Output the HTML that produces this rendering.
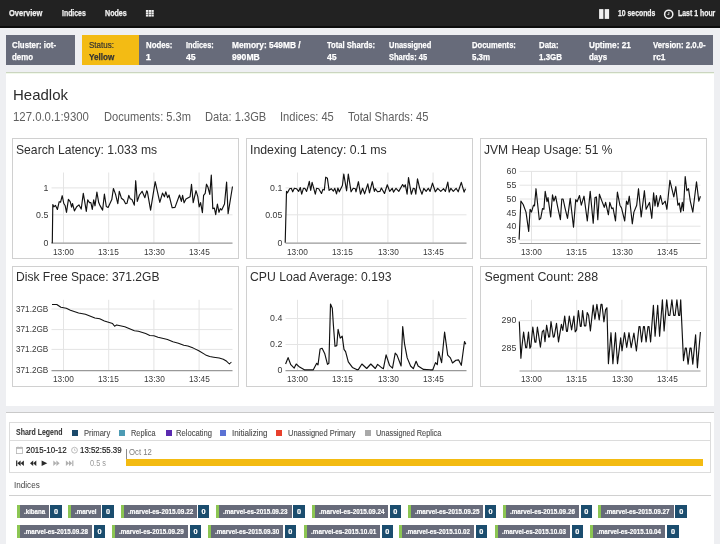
<!DOCTYPE html>
<html><head><meta charset="utf-8"><style>
html,body{margin:0;padding:0;width:720px;height:544px;overflow:hidden;background:#eeeff2;font-family:"Liberation Sans",sans-serif;}
.r{position:absolute}
.t{position:absolute;white-space:nowrap;line-height:1;transform-origin:0 0;filter:grayscale(1)}
svg{position:absolute;left:0;top:0}
</style></head><body>
<div class="r" style="left:0px;top:0px;width:720px;height:26px;background:#222"></div><div class="r" style="left:0px;top:26px;width:720px;height:2px;background:#0d0d0d"></div><div class="r" style="left:6px;top:35.3px;width:69px;height:29.9px;background:#676b7a"></div><div class="r" style="left:82px;top:35.3px;width:57.2px;height:29.9px;background:#f3bb14"></div><div class="r" style="left:139.2px;top:35.3px;width:573.8px;height:29.9px;background:#676b7a"></div><div class="r" style="left:6px;top:72px;width:707.5px;height:334px;background:#fff"></div><div class="r" style="left:6px;top:72px;width:707.5px;height:1px;background:#cbd5c0"></div><div class="r" style="left:6px;top:73px;width:707.5px;height:1px;background:#f1f9ea"></div><div class="r" style="left:12.2px;top:138px;width:227.0px;height:120.7px;border:1px solid #d0d0d0;box-sizing:border-box"></div><div class="r" style="left:246.2px;top:138px;width:227.0px;height:120.7px;border:1px solid #d0d0d0;box-sizing:border-box"></div><div class="r" style="left:480.2px;top:138px;width:227.0px;height:120.7px;border:1px solid #d0d0d0;box-sizing:border-box"></div><div class="r" style="left:12.2px;top:266px;width:227.0px;height:120.7px;border:1px solid #d0d0d0;box-sizing:border-box"></div><div class="r" style="left:246.2px;top:266px;width:227.0px;height:120.7px;border:1px solid #d0d0d0;box-sizing:border-box"></div><div class="r" style="left:480.2px;top:266px;width:227.0px;height:120.7px;border:1px solid #d0d0d0;box-sizing:border-box"></div><div class="r" style="left:6px;top:412px;width:707.5px;height:1px;background:#c9c9c9"></div><div class="r" style="left:6px;top:413px;width:707.5px;height:131px;background:#fff"></div><div class="r" style="left:9px;top:422px;width:701.8px;height:50.5px;border:1px solid #dcdcdc;box-sizing:border-box"></div><div class="r" style="left:9px;top:440px;width:701.8px;height:1px;background:#dcdcdc"></div><div class="r" style="left:72.1px;top:430.3px;width:6px;height:6px;background:#1b4a6b"></div><div class="r" style="left:118.8px;top:430.3px;width:6px;height:6px;background:#4d9bb4"></div><div class="r" style="left:165.6px;top:430.3px;width:6px;height:6px;background:#5a2ab0"></div><div class="r" style="left:220.4px;top:430.3px;width:6px;height:6px;background:#5b72d4"></div><div class="r" style="left:276.3px;top:430.3px;width:6px;height:6px;background:#e8402c"></div><div class="r" style="left:364.5px;top:430.3px;width:6px;height:6px;background:#a9a9a9"></div><div class="r" style="left:126px;top:448.7px;width:1px;height:10.5px;background:#8a8a8a"></div><div class="r" style="left:126.3px;top:458.8px;width:577px;height:7.2px;background:#f3bb12"></div><div class="r" style="left:9.4px;top:495px;width:701.6px;height:1px;background:#d0d0d0"></div><div class="r" style="left:17.0px;top:505px;width:2.9px;height:12.799999999999955px;background:#8cc653"></div><div class="r" style="left:19.900000000000002px;top:505px;width:29.399999999999995px;height:12.799999999999955px;background:#676b7a"></div><div class="r" style="left:50.3px;top:505px;width:11.700000000000003px;height:12.799999999999955px;background:#1b4d6e"></div><div class="r" style="left:68.4px;top:505px;width:2.9px;height:12.799999999999955px;background:#8cc653"></div><div class="r" style="left:71.3px;top:505px;width:29.699999999999996px;height:12.799999999999955px;background:#676b7a"></div><div class="r" style="left:102.3px;top:505px;width:11.700000000000003px;height:12.799999999999955px;background:#1b4d6e"></div><div class="r" style="left:120.7px;top:505px;width:2.9px;height:12.799999999999955px;background:#8cc653"></div><div class="r" style="left:123.6px;top:505px;width:73.4px;height:12.799999999999955px;background:#676b7a"></div><div class="r" style="left:198px;top:505px;width:11.300000000000011px;height:12.799999999999955px;background:#1b4d6e"></div><div class="r" style="left:216.0px;top:505px;width:2.9px;height:12.799999999999955px;background:#8cc653"></div><div class="r" style="left:218.9px;top:505px;width:72.79999999999998px;height:12.799999999999955px;background:#676b7a"></div><div class="r" style="left:293.3px;top:505px;width:11.399999999999977px;height:12.799999999999955px;background:#1b4d6e"></div><div class="r" style="left:311.7px;top:505px;width:2.9px;height:12.799999999999955px;background:#8cc653"></div><div class="r" style="left:314.6px;top:505px;width:73.70000000000002px;height:12.799999999999955px;background:#676b7a"></div><div class="r" style="left:389.7px;top:505px;width:11.0px;height:12.799999999999955px;background:#1b4d6e"></div><div class="r" style="left:407.7px;top:505px;width:2.9px;height:12.799999999999955px;background:#8cc653"></div><div class="r" style="left:410.6px;top:505px;width:72.70000000000002px;height:12.799999999999955px;background:#676b7a"></div><div class="r" style="left:485px;top:505px;width:11.300000000000011px;height:12.799999999999955px;background:#1b4d6e"></div><div class="r" style="left:503.0px;top:505px;width:2.9px;height:12.799999999999955px;background:#8cc653"></div><div class="r" style="left:505.90000000000003px;top:505px;width:73.1px;height:12.799999999999955px;background:#676b7a"></div><div class="r" style="left:580.7px;top:505px;width:11.0px;height:12.799999999999955px;background:#1b4d6e"></div><div class="r" style="left:598.4000000000001px;top:505px;width:2.9px;height:12.799999999999955px;background:#8cc653"></div><div class="r" style="left:601.3000000000001px;top:505px;width:72.59999999999994px;height:12.799999999999955px;background:#676b7a"></div><div class="r" style="left:675.1px;top:505px;width:12.299999999999955px;height:12.799999999999955px;background:#1b4d6e"></div><div class="r" style="left:17.0px;top:525px;width:2.9px;height:12.700000000000045px;background:#8cc653"></div><div class="r" style="left:19.900000000000002px;top:525px;width:72.10000000000001px;height:12.700000000000045px;background:#676b7a"></div><div class="r" style="left:93.7px;top:525px;width:11.599999999999994px;height:12.700000000000045px;background:#1b4d6e"></div><div class="r" style="left:112.0px;top:525px;width:2.9px;height:12.700000000000045px;background:#8cc653"></div><div class="r" style="left:114.89999999999999px;top:525px;width:72.90000000000002px;height:12.700000000000045px;background:#676b7a"></div><div class="r" style="left:189.7px;top:525px;width:11.600000000000023px;height:12.700000000000045px;background:#1b4d6e"></div><div class="r" style="left:208.0px;top:525px;width:2.9px;height:12.700000000000045px;background:#8cc653"></div><div class="r" style="left:210.9px;top:525px;width:72.4px;height:12.700000000000045px;background:#676b7a"></div><div class="r" style="left:284.7px;top:525px;width:11.300000000000011px;height:12.700000000000045px;background:#1b4d6e"></div><div class="r" style="left:303.7px;top:525px;width:2.9px;height:12.700000000000045px;background:#8cc653"></div><div class="r" style="left:306.6px;top:525px;width:73.4px;height:12.700000000000045px;background:#676b7a"></div><div class="r" style="left:381.7px;top:525px;width:11.0px;height:12.700000000000045px;background:#1b4d6e"></div><div class="r" style="left:399.0px;top:525px;width:2.9px;height:12.700000000000045px;background:#8cc653"></div><div class="r" style="left:401.90000000000003px;top:525px;width:72.1px;height:12.700000000000045px;background:#676b7a"></div><div class="r" style="left:475.7px;top:525px;width:11.0px;height:12.700000000000045px;background:#1b4d6e"></div><div class="r" style="left:495.0px;top:525px;width:2.9px;height:12.700000000000045px;background:#8cc653"></div><div class="r" style="left:497.90000000000003px;top:525px;width:72.1px;height:12.700000000000045px;background:#676b7a"></div><div class="r" style="left:571.7px;top:525px;width:11.0px;height:12.700000000000045px;background:#1b4d6e"></div><div class="r" style="left:590.4000000000001px;top:525px;width:2.9px;height:12.700000000000045px;background:#8cc653"></div><div class="r" style="left:593.3000000000001px;top:525px;width:72.19999999999996px;height:12.700000000000045px;background:#676b7a"></div><div class="r" style="left:667px;top:525px;width:12px;height:12.700000000000045px;background:#1b4d6e"></div>
<svg width="720" height="544" viewBox="0 0 720 544"><line x1="51.5" y1="187.9" x2="232.5" y2="187.9" stroke="#e4e4e4" stroke-width="1"/><line x1="51.5" y1="214.8" x2="232.5" y2="214.8" stroke="#e4e4e4" stroke-width="1"/><line x1="63.5" y1="172.5" x2="63.5" y2="242.7" stroke="#e4e4e4" stroke-width="1"/><line x1="108.7" y1="172.5" x2="108.7" y2="242.7" stroke="#e4e4e4" stroke-width="1"/><line x1="153.9" y1="172.5" x2="153.9" y2="242.7" stroke="#e4e4e4" stroke-width="1"/><line x1="199.10000000000002" y1="172.5" x2="199.10000000000002" y2="242.7" stroke="#e4e4e4" stroke-width="1"/><line x1="51.5" y1="243.1" x2="232.5" y2="243.1" stroke="#999" stroke-width="1.1"/><line x1="285.5" y1="187.9" x2="466.5" y2="187.9" stroke="#e4e4e4" stroke-width="1"/><line x1="285.5" y1="214.8" x2="466.5" y2="214.8" stroke="#e4e4e4" stroke-width="1"/><line x1="297.5" y1="172.5" x2="297.5" y2="242.7" stroke="#e4e4e4" stroke-width="1"/><line x1="342.7" y1="172.5" x2="342.7" y2="242.7" stroke="#e4e4e4" stroke-width="1"/><line x1="387.9" y1="172.5" x2="387.9" y2="242.7" stroke="#e4e4e4" stroke-width="1"/><line x1="433.1" y1="172.5" x2="433.1" y2="242.7" stroke="#e4e4e4" stroke-width="1"/><line x1="285.5" y1="243.1" x2="466.5" y2="243.1" stroke="#999" stroke-width="1.1"/><line x1="519.5" y1="171.4" x2="700.5" y2="171.4" stroke="#e4e4e4" stroke-width="1"/><line x1="519.5" y1="185.2" x2="700.5" y2="185.2" stroke="#e4e4e4" stroke-width="1"/><line x1="519.5" y1="199" x2="700.5" y2="199" stroke="#e4e4e4" stroke-width="1"/><line x1="519.5" y1="212.8" x2="700.5" y2="212.8" stroke="#e4e4e4" stroke-width="1"/><line x1="519.5" y1="226.2" x2="700.5" y2="226.2" stroke="#e4e4e4" stroke-width="1"/><line x1="519.5" y1="240" x2="700.5" y2="240" stroke="#e4e4e4" stroke-width="1"/><line x1="531.5" y1="171.4" x2="531.5" y2="243.1" stroke="#e4e4e4" stroke-width="1"/><line x1="576.7" y1="171.4" x2="576.7" y2="243.1" stroke="#e4e4e4" stroke-width="1"/><line x1="621.9" y1="171.4" x2="621.9" y2="243.1" stroke="#e4e4e4" stroke-width="1"/><line x1="667.1" y1="171.4" x2="667.1" y2="243.1" stroke="#e4e4e4" stroke-width="1"/><line x1="519.5" y1="243.5" x2="700.5" y2="243.5" stroke="#999" stroke-width="1.1"/><line x1="51.5" y1="309" x2="232.5" y2="309" stroke="#e4e4e4" stroke-width="1"/><line x1="51.5" y1="329.6" x2="232.5" y2="329.6" stroke="#e4e4e4" stroke-width="1"/><line x1="51.5" y1="349.4" x2="232.5" y2="349.4" stroke="#e4e4e4" stroke-width="1"/><line x1="63.5" y1="299.8" x2="63.5" y2="370.2" stroke="#e4e4e4" stroke-width="1"/><line x1="108.7" y1="299.8" x2="108.7" y2="370.2" stroke="#e4e4e4" stroke-width="1"/><line x1="153.9" y1="299.8" x2="153.9" y2="370.2" stroke="#e4e4e4" stroke-width="1"/><line x1="199.10000000000002" y1="299.8" x2="199.10000000000002" y2="370.2" stroke="#e4e4e4" stroke-width="1"/><line x1="51.5" y1="370.59999999999997" x2="232.5" y2="370.59999999999997" stroke="#999" stroke-width="1.1"/><line x1="285.5" y1="318.5" x2="466.5" y2="318.5" stroke="#e4e4e4" stroke-width="1"/><line x1="285.5" y1="344.5" x2="466.5" y2="344.5" stroke="#e4e4e4" stroke-width="1"/><line x1="297.5" y1="299.8" x2="297.5" y2="370.2" stroke="#e4e4e4" stroke-width="1"/><line x1="342.7" y1="299.8" x2="342.7" y2="370.2" stroke="#e4e4e4" stroke-width="1"/><line x1="387.9" y1="299.8" x2="387.9" y2="370.2" stroke="#e4e4e4" stroke-width="1"/><line x1="433.1" y1="299.8" x2="433.1" y2="370.2" stroke="#e4e4e4" stroke-width="1"/><line x1="285.5" y1="370.59999999999997" x2="466.5" y2="370.59999999999997" stroke="#999" stroke-width="1.1"/><line x1="519.5" y1="320.6" x2="700.5" y2="320.6" stroke="#e4e4e4" stroke-width="1"/><line x1="519.5" y1="348.1" x2="700.5" y2="348.1" stroke="#e4e4e4" stroke-width="1"/><line x1="531.5" y1="299.8" x2="531.5" y2="370.6" stroke="#e4e4e4" stroke-width="1"/><line x1="576.7" y1="299.8" x2="576.7" y2="370.6" stroke="#e4e4e4" stroke-width="1"/><line x1="621.9" y1="299.8" x2="621.9" y2="370.6" stroke="#e4e4e4" stroke-width="1"/><line x1="667.1" y1="299.8" x2="667.1" y2="370.6" stroke="#e4e4e4" stroke-width="1"/><line x1="519.5" y1="371.0" x2="700.5" y2="371.0" stroke="#999" stroke-width="1.1"/><polyline fill="none" stroke="#111" stroke-width="1.15" stroke-linejoin="round" points="51.6,242.7 52.3,242.7 52.8,204.5 53.9,206.8 55.5,205.4 57.4,209.5 59.2,201.7 60.6,202.2 62.2,195.7 63.8,203.5 65.2,205.8 66.5,212.3 68.4,199.4 70.2,201.7 71.6,207.2 72.5,203.5 74.4,210.9 76.7,206.8 79.0,204.9 81.2,209.1 83.3,193.4 84.5,200.3 86.3,211.4 87.7,199.9 89.5,202.6 90.9,202.6 92.3,209.5 93.7,199.9 95.0,205.8 96.9,192.1 98.7,202.6 99.8,205.1 102.6,210.1 104.4,194.1 106.3,206.5 108.1,207.4 111.8,199.6 113.4,188.5 115.5,194.1 117.8,203.7 119.3,191.3 121.4,198.2 123.7,200.0 125.6,203.7 127.0,203.3 128.8,195.4 130.2,198.7 132.0,199.6 134.3,205.1 135.7,180.7 137.3,201.4 139.4,195.0 142.1,191.3 144.9,197.7 146.7,190.8 147.4,191.8 150.6,210.1 155.2,181.7 159.8,202.3 162.5,193.1 164.4,196.8 165.8,191.8 167.6,197.7 169.0,195.0 172.2,207.8 175.0,207.4 179.5,195.0 181.4,201.4 182.6,195.4 184.1,202.8 186.0,199.1 190.1,196.8 191.5,184.4 193.2,202.6 196.0,190.7 197.8,196.7 199.2,206.8 200.6,202.6 202.4,212.7 203.6,195.3 205.2,193.4 206.5,184.2 207.9,187.0 209.8,194.4 211.3,175.1 212.8,208.6 214.4,208.1 215.7,214.6 217.4,204.0 219.0,212.3 220.3,208.6 221.7,210.0 224.5,204.0 226.6,182.0 228.1,213.7 232.5,186.5"/><polyline fill="none" stroke="#111" stroke-width="1.15" stroke-linejoin="round" points="285.2,242.7 286.5,191.4 287.5,192.8 289.6,188.7 291.3,188.3 292.7,191.8 294.4,188.3 296.5,188.7 298.6,191.4 300.3,187.6 301.7,194.2 303.4,188.3 304.8,188.3 306.6,191.4 308.0,186.6 309.3,181.4 310.7,190.4 312.1,182.4 313.5,187.3 315.3,194.2 316.6,188.3 318.7,188.7 321.5,193.5 322.9,189.4 324.3,190.1 325.7,177.2 327.4,178.3 329.1,190.4 331.2,188.7 333.4,191.1 334.8,188.3 336.5,193.9 337.9,188.0 339.3,191.8 342.4,185.5 343.8,174.1 346.6,190.8 348.3,174.1 351.1,191.8 353.2,188.3 355.3,188.7 356.0,191.8 358.4,181.7 360.5,194.2 362.6,188.3 364.6,193.9 367.8,183.8 369.5,192.8 372.3,181.7 374.4,191.4 375.4,188.7 377.5,191.8 379.9,191.4 381.4,188.0 384.5,193.5 387.3,184.8 389.7,191.4 392.2,188.3 393.5,192.1 396.0,188.3 398.8,191.4 402.6,184.5 404.0,186.9 405.3,184.8 407.1,194.2 408.5,177.6 411.3,194.2 413.3,188.3 414.7,188.7 415.8,194.2 417.5,178.9 419.6,188.0 422.0,194.2 423.8,188.3 426.2,191.4 428.3,188.3 430.1,191.4 432.5,183.1 435.3,191.8 437.7,188.3 440.8,191.4 443.6,188.7 445.4,191.4 447.8,182.1 449.2,192.1 450.9,188.3 453.3,191.4 456.1,188.3 458.2,191.8 461.3,182.4 464.1,192.1 465.5,188.7"/><polyline fill="none" stroke="#111" stroke-width="1.15" stroke-linejoin="round" points="519.1,239.6 520.9,201.1 523.2,204.5 526.0,212.1 528.7,231.4 530.1,209.3 531.5,212.1 533.5,205.2 534.5,205.9 536.0,188.7 539.3,219.7 540.7,218.3 542.5,208.6 543.9,209.3 545.2,191.4 547.0,201.7 548.0,197.6 550.7,216.9 552.5,194.9 553.9,201.1 555.6,196.2 557.6,206.6 560.4,219.7 561.8,199.0 563.1,199.0 565.0,207.9 567.5,218.3 570.2,198.3 573.5,227.2 575.7,199.7 577.1,201.7 579.5,195.5 581.3,205.2 584.0,196.2 587.3,221.0 590.2,191.4 593.2,223.1 595.0,197.6 596.4,196.9 597.8,219.7 599.4,194.2 601.9,201.1 604.3,207.3 605.6,202.4 608.4,214.8 609.8,202.4 611.8,208.6 613.0,207.9 615.5,221.0 617.4,192.1 619.9,205.2 621.5,207.9 624.7,221.0 626.5,201.1 627.9,204.5 629.3,196.2 632.3,223.8 633.9,212.1 636.7,205.2 638.5,188.7 641.2,216.9 644.4,190.7 646.1,209.3 649.5,202.4 651.8,218.3 653.6,192.8 655.0,205.9 656.4,195.5 657.8,206.6 660.5,195.5 662.5,204.5 665.2,201.1 666.9,209.3 669.9,180.4 673.8,196.9 675.8,186.6 677.9,205.2 679.3,203.1 680.7,212.1 682.3,202.4 683.4,210.7 685.2,176.5 686.9,190.7 688.5,188.7 690.3,201.1 692.8,212.1 696.5,181.8 698.8,201.1 700.4,196.2"/><polyline fill="none" stroke="#111" stroke-width="1.15" stroke-linejoin="round" points="285.6,364.0 288.1,357.6 290.8,364.7 294.2,368.1 296.2,364.0 299.6,367.1 304.4,369.8 313.3,369.8 316.7,363.3 318.0,364.9 320.1,349.0 322.1,348.3 324.8,353.8 327.5,364.4 328.9,363.3 330.5,304.1 332.3,308.2 333.4,325.2 335.0,346.3 336.8,345.6 338.1,329.3 340.2,338.1 342.2,336.1 344.0,349.4 345.6,351.7 348.3,361.9 352.4,367.4 357.2,369.8 358.5,369.4 361.9,364.0 366.7,368.5 370.8,364.0 375.3,368.5 377.6,364.4 382.1,368.1 383.4,368.7 386.1,354.9 389.5,365.3 392.5,368.1 395.2,353.1 397.0,355.1 401.1,366.0 402.7,326.6 404.5,343.6 407.2,357.9 410.6,366.0 413.3,368.7 416.1,361.3 418.1,366.0 423.5,369.4 430.1,369.8 432.8,369.8 435.5,362.6 437.3,364.7 438.6,351.7 441.6,362.6 444.6,332.0 447.7,355.1 450.4,357.9 452.5,363.0 455.9,360.3 458.6,359.9 461.3,365.3 464.5,341.5 465.8,344.3"/><polyline fill="none" stroke="#111" stroke-width="1.15" stroke-linejoin="round" points="519.3,321.5 520.9,358.3 521.8,347.7 523.6,332.1 525.7,347.7 526.7,347.7 528.5,332.1 529.9,348.2 530.8,346.8 532.8,327.0 534.9,342.2 535.9,342.2 537.4,327.0 540.4,347.2 542.3,331.6 543.7,330.2 545.0,341.7 546.6,325.2 548.7,337.1 549.6,336.7 551.0,321.5 553.3,337.1 554.2,336.7 556.5,323.3 558.5,341.9 561.4,324.4 562.8,330.4 564.7,316.1 566.5,331.3 567.4,331.3 569.3,316.1 571.6,329.9 573.9,316.1 575.2,331.8 576.6,329.9 578.4,310.6 580.3,326.3 581.2,326.3 582.6,310.6 584.4,325.8 585.8,325.8 587.2,312.5 588.6,315.2 590.4,330.9 593.2,305.1 594.9,319.2 596.9,304.4 599.2,319.9 601.0,304.4 602.0,304.4 603.9,321.8 605.6,309.6 606.9,307.7 608.4,363.6 611.0,332.7 612.9,363.6 615.5,332.7 617.5,363.6 620.7,337.9 622.0,350.8 624.5,332.7 626.7,347.5 629.0,332.7 631.2,347.6 633.9,333.0 636.4,351.0 639.0,326.5 640.0,326.5 641.6,342.0 643.5,326.5 644.4,326.5 646.1,342.0 648.0,326.5 649.0,326.5 650.6,342.0 653.4,305.3 655.1,336.2 657.7,305.3 659.6,336.2 662.4,299.9 664.1,331.0 666.7,299.9 668.5,315.3 669.9,315.3 671.9,299.9 673.7,315.3 675.1,315.3 676.9,299.9 678.6,315.3 679.7,315.3 680.7,299.9 683.5,360.6 685.3,348.1 686.3,348.1 688.1,364.1 690.0,348.1 691.1,348.1 692.8,364.1 695.6,334.8 697.4,367.6 700.4,332.0"/><polyline fill="none" stroke="#111" stroke-width="1.05" stroke-linejoin="round" points="52.0,304.4 56.8,304.5 60.9,307.3 66.3,308.2 70.4,310.2 78.6,313.0 85.4,314.3 94.9,318.1 99.7,318.7 104.4,320.9 112.6,323.6 114.6,326.3 116.7,324.9 124.8,326.8 134.4,330.7 138.4,331.3 145.7,333.6 149.8,335.4 153.9,335.8 158.0,337.2 163.4,338.5 167.5,339.5 172.9,341.8 178.4,343.2 183.8,345.3 187.9,345.9 193.3,348.1 198.8,350.8 205.6,354.9 209.7,356.5 213.7,357.2 219.2,358.1 223.3,359.2 226.7,361.3 229.4,364.0 231.4,362.0"/><rect x="145.90" y="10.00" width="2.35" height="1.95" fill="#f0f0f0"/><rect x="145.90" y="12.30" width="2.35" height="1.95" fill="#f0f0f0"/><rect x="145.90" y="14.60" width="2.35" height="1.95" fill="#f0f0f0"/><rect x="148.65" y="10.00" width="2.35" height="1.95" fill="#f0f0f0"/><rect x="148.65" y="12.30" width="2.35" height="1.95" fill="#f0f0f0"/><rect x="148.65" y="14.60" width="2.35" height="1.95" fill="#f0f0f0"/><rect x="151.40" y="10.00" width="2.35" height="1.95" fill="#f0f0f0"/><rect x="151.40" y="12.30" width="2.35" height="1.95" fill="#f0f0f0"/><rect x="151.40" y="14.60" width="2.35" height="1.95" fill="#f0f0f0"/><rect x="599.1" y="9.1" width="4.3" height="9.8" fill="#f0f0f0"/><rect x="604.7" y="9.1" width="4.4" height="9.8" fill="#f0f0f0"/><circle cx="668.7" cy="14.3" r="4.1" fill="none" stroke="#f0f0f0" stroke-width="1.5"/><path d="M668.9 12 V14.6 H667.4" fill="none" stroke="#e0e0e0" stroke-width="0.9"/><rect x="16.5" y="447.6" width="6" height="6" fill="none" stroke="#b5b5b5" stroke-width="0.8"/><rect x="16.1" y="447.2" width="6.8" height="1.6" fill="#b5b5b5"/><rect x="17.6" y="446.5" width="0.8" height="1.4" fill="#b5b5b5"/><rect x="20.6" y="446.5" width="0.8" height="1.4" fill="#b5b5b5"/><circle cx="74.5" cy="450.2" r="2.9" fill="none" stroke="#aaa" stroke-width="0.8"/><path d="M74.5 448.6 V450.4 H75.6" fill="none" stroke="#aaa" stroke-width="0.6"/><rect x="16.1" y="460.5" width="1.2" height="5.6" fill="#2a2a2a"/><path d="M17.3 463.3 L20.6 460.5 L20.6 466.1 Z" fill="#2a2a2a"/><path d="M20.6 463.3 L23.900000000000002 460.5 L23.900000000000002 466.1 Z" fill="#2a2a2a"/><path d="M30.0 463.3 L33.2 460.5 L33.2 466.1 Z" fill="#2a2a2a"/><path d="M33.1 463.3 L36.300000000000004 460.5 L36.300000000000004 466.1 Z" fill="#2a2a2a"/><path d="M41.6 460.5 L47.3 463.3 L41.6 466.1 Z" fill="#2a2a2a"/><path d="M56.5 463.3 L53.3 460.5 L53.3 466.1 Z" fill="#b0b0b0"/><path d="M59.6 463.3 L56.4 460.5 L56.4 466.1 Z" fill="#b0b0b0"/><path d="M69.1 463.3 L65.89999999999999 460.5 L65.89999999999999 466.1 Z" fill="#b0b0b0"/><path d="M72.2 463.3 L69.0 460.5 L69.0 466.1 Z" fill="#b0b0b0"/><rect x="72.2" y="460.5" width="1.2" height="5.6" fill="#b0b0b0"/></svg>
<div class="t" style="left:9.00px;top:9.13px;font-size:9.3px;font-weight:bold;color:#f2f2f2;-webkit-text-stroke:0.25px #f2f2f2;transform:scaleX(0.8054)">Overview</div><div class="t" style="left:61.80px;top:9.13px;font-size:9.3px;font-weight:bold;color:#f2f2f2;-webkit-text-stroke:0.25px #f2f2f2;transform:scaleX(0.7429)">Indices</div><div class="t" style="left:104.90px;top:9.13px;font-size:9.3px;font-weight:bold;color:#f2f2f2;-webkit-text-stroke:0.25px #f2f2f2;transform:scaleX(0.7673)">Nodes</div><div class="t" style="left:618.00px;top:9.13px;font-size:9.3px;font-weight:bold;color:#f2f2f2;-webkit-text-stroke:0.25px #f2f2f2;transform:scaleX(0.7365)">10 seconds</div><div class="t" style="left:677.90px;top:9.13px;font-size:9.3px;font-weight:bold;color:#f2f2f2;-webkit-text-stroke:0.25px #f2f2f2;transform:scaleX(0.7444)">Last 1 hour</div><div class="t" style="left:12.00px;top:40.04px;font-size:9.4px;font-weight:bold;color:#ffffff;-webkit-text-stroke:0.25px #ffffff;transform:scaleX(0.8365)">Cluster: iot-</div><div class="t" style="left:12.00px;top:52.24px;font-size:9.4px;font-weight:bold;color:#ffffff;-webkit-text-stroke:0.25px #ffffff;transform:scaleX(0.8399)">demo</div><div class="t" style="left:88.50px;top:40.04px;font-size:9.4px;font-weight:normal;color:#3b3318;-webkit-text-stroke:0.2px #3b3318;transform:scaleX(0.8533)">Status:</div><div class="t" style="left:88.50px;top:52.24px;font-size:9.4px;font-weight:bold;color:#3b3318;-webkit-text-stroke:0.25px #3b3318;transform:scaleX(0.8671)">Yellow</div><div class="t" style="left:145.80px;top:40.04px;font-size:9.4px;font-weight:bold;color:#ffffff;-webkit-text-stroke:0.25px #ffffff;transform:scaleX(0.8309)">Nodes:</div><div class="t" style="left:145.80px;top:52.24px;font-size:9.4px;font-weight:bold;color:#ffffff;-webkit-text-stroke:0.25px #ffffff">1</div><div class="t" style="left:186.10px;top:40.04px;font-size:9.4px;font-weight:bold;color:#ffffff;-webkit-text-stroke:0.25px #ffffff;transform:scaleX(0.7819)">Indices:</div><div class="t" style="left:186.10px;top:52.24px;font-size:9.4px;font-weight:bold;color:#ffffff;-webkit-text-stroke:0.25px #ffffff;transform:scaleX(0.9302)">45</div><div class="t" style="left:231.90px;top:40.04px;font-size:9.4px;font-weight:bold;color:#ffffff;-webkit-text-stroke:0.25px #ffffff;transform:scaleX(0.8897)">Memory: 549MB /</div><div class="t" style="left:231.90px;top:52.24px;font-size:9.4px;font-weight:bold;color:#ffffff;-webkit-text-stroke:0.25px #ffffff;transform:scaleX(0.9199)">990MB</div><div class="t" style="left:326.60px;top:40.04px;font-size:9.4px;font-weight:bold;color:#ffffff;-webkit-text-stroke:0.25px #ffffff;transform:scaleX(0.8124)">Total Shards:</div><div class="t" style="left:326.60px;top:52.24px;font-size:9.4px;font-weight:bold;color:#ffffff;-webkit-text-stroke:0.25px #ffffff;transform:scaleX(0.9302)">45</div><div class="t" style="left:389.40px;top:40.04px;font-size:9.4px;font-weight:bold;color:#ffffff;-webkit-text-stroke:0.25px #ffffff;transform:scaleX(0.7942)">Unassigned</div><div class="t" style="left:389.40px;top:52.24px;font-size:9.4px;font-weight:bold;color:#ffffff;-webkit-text-stroke:0.25px #ffffff;transform:scaleX(0.7948)">Shards: 45</div><div class="t" style="left:471.90px;top:40.04px;font-size:9.4px;font-weight:bold;color:#ffffff;-webkit-text-stroke:0.25px #ffffff;transform:scaleX(0.8104)">Documents:</div><div class="t" style="left:471.90px;top:52.24px;font-size:9.4px;font-weight:bold;color:#ffffff;-webkit-text-stroke:0.25px #ffffff;transform:scaleX(0.8424)">5.3m</div><div class="t" style="left:538.50px;top:40.04px;font-size:9.4px;font-weight:bold;color:#ffffff;-webkit-text-stroke:0.25px #ffffff;transform:scaleX(0.8318)">Data:</div><div class="t" style="left:538.50px;top:52.24px;font-size:9.4px;font-weight:bold;color:#ffffff;-webkit-text-stroke:0.25px #ffffff;transform:scaleX(0.8489)">1.3GB</div><div class="t" style="left:588.50px;top:40.04px;font-size:9.4px;font-weight:bold;color:#ffffff;-webkit-text-stroke:0.25px #ffffff;transform:scaleX(0.8701)">Uptime: 21</div><div class="t" style="left:588.50px;top:52.24px;font-size:9.4px;font-weight:bold;color:#ffffff;-webkit-text-stroke:0.25px #ffffff;transform:scaleX(0.8470)">days</div><div class="t" style="left:652.50px;top:40.04px;font-size:9.4px;font-weight:bold;color:#ffffff;-webkit-text-stroke:0.25px #ffffff;transform:scaleX(0.8290)">Version: 2.0.0-</div><div class="t" style="left:652.50px;top:52.24px;font-size:9.4px;font-weight:bold;color:#ffffff;-webkit-text-stroke:0.25px #ffffff;transform:scaleX(0.8809)">rc1</div><div class="t" style="left:13.30px;top:87.51px;font-size:14.4px;font-weight:normal;color:#2b2b2b;transform:scaleX(1.0417)">Headlok</div><div class="t" style="left:13.30px;top:111.17px;font-size:12.2px;font-weight:normal;color:#5f5f5f;transform:scaleX(0.9333)">127.0.0.1:9300</div><div class="t" style="left:103.80px;top:111.17px;font-size:12.2px;font-weight:normal;color:#5f5f5f;transform:scaleX(0.9109)">Documents: 5.3m</div><div class="t" style="left:205.00px;top:111.17px;font-size:12.2px;font-weight:normal;color:#5f5f5f;transform:scaleX(0.9140)">Data: 1.3GB</div><div class="t" style="left:280.00px;top:111.17px;font-size:12.2px;font-weight:normal;color:#5f5f5f;transform:scaleX(0.9127)">Indices: 45</div><div class="t" style="left:347.50px;top:111.17px;font-size:12.2px;font-weight:normal;color:#5f5f5f;transform:scaleX(0.9140)">Total Shards: 45</div><div class="t" style="left:16.40px;top:143.80px;font-size:12.4px;font-weight:normal;color:#2e2e2e;transform:scaleX(0.9809)">Search Latency: 1.033 ms</div><div class="t" style="left:53.10px;top:247.59px;font-size:8.4px;font-weight:normal;color:#3a3a3a;transform:scaleX(0.9925)">13:00</div><div class="t" style="left:98.30px;top:247.59px;font-size:8.4px;font-weight:normal;color:#3a3a3a;transform:scaleX(0.9925)">13:15</div><div class="t" style="left:143.50px;top:247.59px;font-size:8.4px;font-weight:normal;color:#3a3a3a;transform:scaleX(0.9925)">13:30</div><div class="t" style="left:188.70px;top:247.59px;font-size:8.4px;font-weight:normal;color:#3a3a3a;transform:scaleX(0.9925)">13:45</div><div class="t" style="left:43.41px;top:183.75px;font-size:8.8px;font-weight:normal;color:#383838">1</div><div class="t" style="left:36.07px;top:210.65px;font-size:8.8px;font-weight:normal;color:#383838">0.5</div><div class="t" style="left:43.41px;top:238.55px;font-size:8.8px;font-weight:normal;color:#383838">0</div><div class="t" style="left:250.40px;top:143.80px;font-size:12.4px;font-weight:normal;color:#2e2e2e;transform:scaleX(0.9923)">Indexing Latency: 0.1 ms</div><div class="t" style="left:287.10px;top:247.59px;font-size:8.4px;font-weight:normal;color:#3a3a3a;transform:scaleX(0.9925)">13:00</div><div class="t" style="left:332.30px;top:247.59px;font-size:8.4px;font-weight:normal;color:#3a3a3a;transform:scaleX(0.9925)">13:15</div><div class="t" style="left:377.50px;top:247.59px;font-size:8.4px;font-weight:normal;color:#3a3a3a;transform:scaleX(0.9925)">13:30</div><div class="t" style="left:422.70px;top:247.59px;font-size:8.4px;font-weight:normal;color:#3a3a3a;transform:scaleX(0.9925)">13:45</div><div class="t" style="left:270.07px;top:183.75px;font-size:8.8px;font-weight:normal;color:#383838">0.1</div><div class="t" style="left:265.18px;top:210.65px;font-size:8.8px;font-weight:normal;color:#383838">0.05</div><div class="t" style="left:277.41px;top:238.55px;font-size:8.8px;font-weight:normal;color:#383838">0</div><div class="t" style="left:484.40px;top:143.80px;font-size:12.4px;font-weight:normal;color:#2e2e2e;transform:scaleX(0.9718)">JVM Heap Usage: 51 %</div><div class="t" style="left:521.10px;top:247.99px;font-size:8.4px;font-weight:normal;color:#3a3a3a;transform:scaleX(0.9925)">13:00</div><div class="t" style="left:566.30px;top:247.99px;font-size:8.4px;font-weight:normal;color:#3a3a3a;transform:scaleX(0.9925)">13:15</div><div class="t" style="left:611.50px;top:247.99px;font-size:8.4px;font-weight:normal;color:#3a3a3a;transform:scaleX(0.9925)">13:30</div><div class="t" style="left:656.70px;top:247.99px;font-size:8.4px;font-weight:normal;color:#3a3a3a;transform:scaleX(0.9925)">13:45</div><div class="t" style="left:506.52px;top:167.25px;font-size:8.8px;font-weight:normal;color:#383838">60</div><div class="t" style="left:506.52px;top:181.05px;font-size:8.8px;font-weight:normal;color:#383838">55</div><div class="t" style="left:506.52px;top:194.85px;font-size:8.8px;font-weight:normal;color:#383838">50</div><div class="t" style="left:506.52px;top:208.65px;font-size:8.8px;font-weight:normal;color:#383838">45</div><div class="t" style="left:506.52px;top:222.05px;font-size:8.8px;font-weight:normal;color:#383838">40</div><div class="t" style="left:506.52px;top:235.85px;font-size:8.8px;font-weight:normal;color:#383838">35</div><div class="t" style="left:16.40px;top:270.60px;font-size:12.4px;font-weight:normal;color:#2e2e2e;transform:scaleX(0.9737)">Disk Free Space: 371.2GB</div><div class="t" style="left:53.10px;top:375.09px;font-size:8.4px;font-weight:normal;color:#3a3a3a;transform:scaleX(0.9925)">13:00</div><div class="t" style="left:98.30px;top:375.09px;font-size:8.4px;font-weight:normal;color:#3a3a3a;transform:scaleX(0.9925)">13:15</div><div class="t" style="left:143.50px;top:375.09px;font-size:8.4px;font-weight:normal;color:#3a3a3a;transform:scaleX(0.9925)">13:30</div><div class="t" style="left:188.70px;top:375.09px;font-size:8.4px;font-weight:normal;color:#3a3a3a;transform:scaleX(0.9925)">13:45</div><div class="t" style="left:16.00px;top:304.85px;font-size:8.8px;font-weight:normal;color:#383838;transform:scaleX(0.9302)">371.2GB</div><div class="t" style="left:16.00px;top:325.45px;font-size:8.8px;font-weight:normal;color:#383838;transform:scaleX(0.9302)">371.2GB</div><div class="t" style="left:16.00px;top:345.25px;font-size:8.8px;font-weight:normal;color:#383838;transform:scaleX(0.9302)">371.2GB</div><div class="t" style="left:16.00px;top:366.05px;font-size:8.8px;font-weight:normal;color:#383838;transform:scaleX(0.9302)">371.2GB</div><div class="t" style="left:250.40px;top:270.60px;font-size:12.4px;font-weight:normal;color:#2e2e2e;transform:scaleX(0.9846)">CPU Load Average: 0.193</div><div class="t" style="left:287.10px;top:375.09px;font-size:8.4px;font-weight:normal;color:#3a3a3a;transform:scaleX(0.9925)">13:00</div><div class="t" style="left:332.30px;top:375.09px;font-size:8.4px;font-weight:normal;color:#3a3a3a;transform:scaleX(0.9925)">13:15</div><div class="t" style="left:377.50px;top:375.09px;font-size:8.4px;font-weight:normal;color:#3a3a3a;transform:scaleX(0.9925)">13:30</div><div class="t" style="left:422.70px;top:375.09px;font-size:8.4px;font-weight:normal;color:#3a3a3a;transform:scaleX(0.9925)">13:45</div><div class="t" style="left:270.07px;top:314.35px;font-size:8.8px;font-weight:normal;color:#383838">0.4</div><div class="t" style="left:270.07px;top:340.35px;font-size:8.8px;font-weight:normal;color:#383838">0.2</div><div class="t" style="left:277.41px;top:366.05px;font-size:8.8px;font-weight:normal;color:#383838">0</div><div class="t" style="left:484.40px;top:270.60px;font-size:12.4px;font-weight:normal;color:#2e2e2e">Segment Count: 288</div><div class="t" style="left:521.10px;top:375.49px;font-size:8.4px;font-weight:normal;color:#3a3a3a;transform:scaleX(0.9925)">13:00</div><div class="t" style="left:566.30px;top:375.49px;font-size:8.4px;font-weight:normal;color:#3a3a3a;transform:scaleX(0.9925)">13:15</div><div class="t" style="left:611.50px;top:375.49px;font-size:8.4px;font-weight:normal;color:#3a3a3a;transform:scaleX(0.9925)">13:30</div><div class="t" style="left:656.70px;top:375.49px;font-size:8.4px;font-weight:normal;color:#3a3a3a;transform:scaleX(0.9925)">13:45</div><div class="t" style="left:501.62px;top:316.45px;font-size:8.8px;font-weight:normal;color:#383838">290</div><div class="t" style="left:501.62px;top:343.95px;font-size:8.8px;font-weight:normal;color:#383838">285</div><div class="t" style="left:16.00px;top:428.15px;font-size:8.8px;font-weight:bold;color:#333;-webkit-text-stroke:0.05px #333;transform:scaleX(0.7928)">Shard Legend</div><div class="t" style="left:83.80px;top:428.95px;font-size:8.8px;font-weight:normal;color:#4d4d4d;-webkit-text-stroke:0.12px #4d4d4d;transform:scaleX(0.8647)">Primary</div><div class="t" style="left:130.60px;top:428.95px;font-size:8.8px;font-weight:normal;color:#4d4d4d;-webkit-text-stroke:0.12px #4d4d4d;transform:scaleX(0.8351)">Replica</div><div class="t" style="left:175.60px;top:428.95px;font-size:8.8px;font-weight:normal;color:#4d4d4d;-webkit-text-stroke:0.12px #4d4d4d;transform:scaleX(0.8661)">Relocating</div><div class="t" style="left:231.60px;top:428.95px;font-size:8.8px;font-weight:normal;color:#4d4d4d;-webkit-text-stroke:0.12px #4d4d4d;transform:scaleX(0.9190)">Initializing</div><div class="t" style="left:287.50px;top:428.95px;font-size:8.8px;font-weight:normal;color:#4d4d4d;-webkit-text-stroke:0.12px #4d4d4d;transform:scaleX(0.8523)">Unassigned Primary</div><div class="t" style="left:375.50px;top:428.95px;font-size:8.8px;font-weight:normal;color:#4d4d4d;-webkit-text-stroke:0.12px #4d4d4d;transform:scaleX(0.8346)">Unassigned Replica</div><div class="t" style="left:25.50px;top:446.09px;font-size:8.4px;font-weight:normal;color:#222;-webkit-text-stroke:0.18px #222;transform:scaleX(0.9500)">2015-10-12</div><div class="t" style="left:80.00px;top:446.09px;font-size:8.4px;font-weight:normal;color:#222;-webkit-text-stroke:0.18px #222;transform:scaleX(0.9403)">13:52:55.39</div><div class="t" style="left:90.00px;top:459.39px;font-size:8.4px;font-weight:normal;color:#9a9a9a;transform:scaleX(0.8812)">0.5 s</div><div class="t" style="left:129.20px;top:448.96px;font-size:8.2px;font-weight:normal;color:#7d7d7d;transform:scaleX(0.9453)">Oct 12</div><div class="t" style="left:14.30px;top:481.14px;font-size:8.7px;font-weight:normal;color:#444;transform:scaleX(0.9337)">Indices</div><div class="t" style="left:23.80px;top:507.92px;font-size:7.3px;font-weight:bold;color:#ffffff;-webkit-text-stroke:0.2px #ffffff;transform:scaleX(0.8432)">.kibana</div><div class="t" style="left:54.12px;top:507.92px;font-size:7.3px;font-weight:bold;color:#ffffff;-webkit-text-stroke:0.2px #ffffff">0</div><div class="t" style="left:75.20px;top:507.92px;font-size:7.3px;font-weight:bold;color:#ffffff;-webkit-text-stroke:0.2px #ffffff;transform:scaleX(0.8413)">.marvel</div><div class="t" style="left:106.12px;top:507.92px;font-size:7.3px;font-weight:bold;color:#ffffff;-webkit-text-stroke:0.2px #ffffff">0</div><div class="t" style="left:127.50px;top:507.92px;font-size:7.3px;font-weight:bold;color:#ffffff;-webkit-text-stroke:0.2px #ffffff;transform:scaleX(0.8687)">.marvel-es-2015.09.22</div><div class="t" style="left:201.62px;top:507.92px;font-size:7.3px;font-weight:bold;color:#ffffff;-webkit-text-stroke:0.2px #ffffff">0</div><div class="t" style="left:222.80px;top:507.92px;font-size:7.3px;font-weight:bold;color:#ffffff;-webkit-text-stroke:0.2px #ffffff;transform:scaleX(0.8607)">.marvel-es-2015.09.23</div><div class="t" style="left:296.97px;top:507.92px;font-size:7.3px;font-weight:bold;color:#ffffff;-webkit-text-stroke:0.2px #ffffff">0</div><div class="t" style="left:318.50px;top:507.92px;font-size:7.3px;font-weight:bold;color:#ffffff;-webkit-text-stroke:0.2px #ffffff;transform:scaleX(0.8727)">.marvel-es-2015.09.24</div><div class="t" style="left:393.17px;top:507.92px;font-size:7.3px;font-weight:bold;color:#ffffff;-webkit-text-stroke:0.2px #ffffff">0</div><div class="t" style="left:414.50px;top:507.92px;font-size:7.3px;font-weight:bold;color:#ffffff;-webkit-text-stroke:0.2px #ffffff;transform:scaleX(0.8594)">.marvel-es-2015.09.25</div><div class="t" style="left:488.62px;top:507.92px;font-size:7.3px;font-weight:bold;color:#ffffff;-webkit-text-stroke:0.2px #ffffff">0</div><div class="t" style="left:509.80px;top:507.92px;font-size:7.3px;font-weight:bold;color:#ffffff;-webkit-text-stroke:0.2px #ffffff;transform:scaleX(0.8647)">.marvel-es-2015.09.26</div><div class="t" style="left:584.17px;top:507.92px;font-size:7.3px;font-weight:bold;color:#ffffff;-webkit-text-stroke:0.2px #ffffff">0</div><div class="t" style="left:605.20px;top:507.92px;font-size:7.3px;font-weight:bold;color:#ffffff;-webkit-text-stroke:0.2px #ffffff;transform:scaleX(0.8581)">.marvel-es-2015.09.27</div><div class="t" style="left:679.22px;top:507.92px;font-size:7.3px;font-weight:bold;color:#ffffff;-webkit-text-stroke:0.2px #ffffff">0</div><div class="t" style="left:23.80px;top:527.92px;font-size:7.3px;font-weight:bold;color:#ffffff;-webkit-text-stroke:0.2px #ffffff;transform:scaleX(0.8514)">.marvel-es-2015.09.28</div><div class="t" style="left:97.47px;top:527.92px;font-size:7.3px;font-weight:bold;color:#ffffff;-webkit-text-stroke:0.2px #ffffff">0</div><div class="t" style="left:118.80px;top:527.92px;font-size:7.3px;font-weight:bold;color:#ffffff;-webkit-text-stroke:0.2px #ffffff;transform:scaleX(0.8621)">.marvel-es-2015.09.29</div><div class="t" style="left:193.47px;top:527.92px;font-size:7.3px;font-weight:bold;color:#ffffff;-webkit-text-stroke:0.2px #ffffff">0</div><div class="t" style="left:214.80px;top:527.92px;font-size:7.3px;font-weight:bold;color:#ffffff;-webkit-text-stroke:0.2px #ffffff;transform:scaleX(0.8554)">.marvel-es-2015.09.30</div><div class="t" style="left:288.32px;top:527.92px;font-size:7.3px;font-weight:bold;color:#ffffff;-webkit-text-stroke:0.2px #ffffff">0</div><div class="t" style="left:310.50px;top:527.92px;font-size:7.3px;font-weight:bold;color:#ffffff;-webkit-text-stroke:0.2px #ffffff;transform:scaleX(0.8687)">.marvel-es-2015.10.01</div><div class="t" style="left:385.17px;top:527.92px;font-size:7.3px;font-weight:bold;color:#ffffff;-webkit-text-stroke:0.2px #ffffff">0</div><div class="t" style="left:405.80px;top:527.92px;font-size:7.3px;font-weight:bold;color:#ffffff;-webkit-text-stroke:0.2px #ffffff;transform:scaleX(0.8514)">.marvel-es-2015.10.02</div><div class="t" style="left:479.17px;top:527.92px;font-size:7.3px;font-weight:bold;color:#ffffff;-webkit-text-stroke:0.2px #ffffff">0</div><div class="t" style="left:501.80px;top:527.92px;font-size:7.3px;font-weight:bold;color:#ffffff;-webkit-text-stroke:0.2px #ffffff;transform:scaleX(0.8514)">.marvel-es-2015.10.03</div><div class="t" style="left:575.17px;top:527.92px;font-size:7.3px;font-weight:bold;color:#ffffff;-webkit-text-stroke:0.2px #ffffff">0</div><div class="t" style="left:597.20px;top:527.92px;font-size:7.3px;font-weight:bold;color:#ffffff;-webkit-text-stroke:0.2px #ffffff;transform:scaleX(0.8527)">.marvel-es-2015.10.04</div><div class="t" style="left:670.97px;top:527.92px;font-size:7.3px;font-weight:bold;color:#ffffff;-webkit-text-stroke:0.2px #ffffff">0</div>
</body></html>
